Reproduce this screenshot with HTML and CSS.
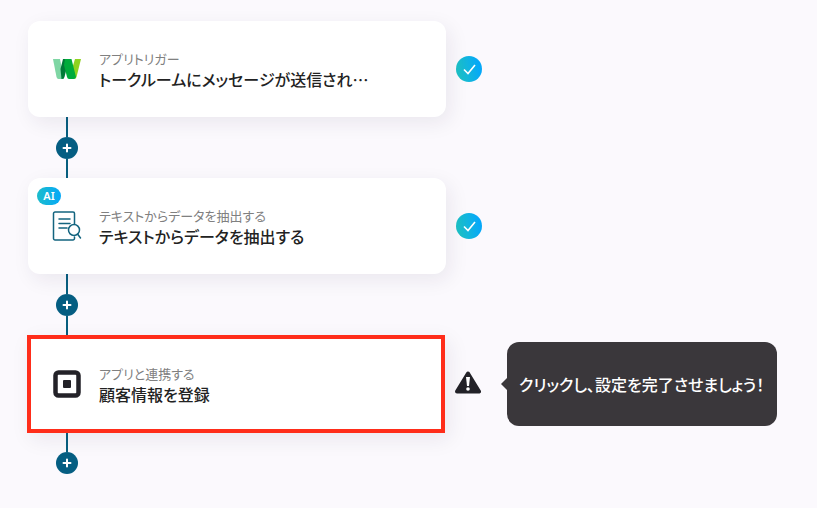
FILE: index.html
```html
<!DOCTYPE html>
<html lang="ja">
<head>
    <meta charset="UTF-8">
    <meta name="viewport" content="width=device-width, initial-scale=1.0">
    <title>フロー設定</title>
    <link rel="stylesheet" href="styles.css">
</head>
<body>
    <main class="flow">
        <!-- トリガー -->
        <div class="step">
            <button type="button" class="card">
                <svg class="card-icon" viewBox="0 0 28 28" aria-hidden="true">
                    <path fill="#7fd6a4" d="M0 4h7l4 20H5.500q-1.500 0-2-2z"/>
                    <path fill="#8fd320" d="M22 4h6l-4.500 18q-.5 2-2.500 2h-5z"/>
                    <path fill="#007a37" d="M10 4h6l-4.500 18q-.5 2-2.500 2H8.500L7.500 14z"/>
                    <path fill="#00ab3b" d="M12 4h6.500l4.500 18q-.5 2-2.500 2H16q-1.500 0-2-2l-3-12z"/>
                </svg>
                <span class="card-text">
                    <span class="card-label">アプリトリガー</span>
                    <span class="card-title">トークルームにメッセージが送信され…</span>
                </span>
            </button>
            <svg class="status" viewBox="0 0 26 26" role="img" aria-label="設定済み">
                <defs>
                    <linearGradient id="done" x1="0" y1="0.6" x2="1" y2="0.4">
                        <stop offset="0.1" stop-color="#1cc0c8"/>
                        <stop offset="0.9" stop-color="#05a8f8"/>
                    </linearGradient>
                </defs>
                <circle cx="13" cy="13" r="13" fill="url(#done)"/>
                <path d="M8 13.500l4 4 7-8.500" fill="none" stroke="#fff" stroke-width="1.600"/>
            </svg>
        </div>

        <div class="connector">
            <button type="button" class="add" aria-label="追加">
                <svg viewBox="0 0 22 22"><path d="M11 7.500v7M7.500 11h7"/></svg>
            </button>
        </div>

        <!-- AIによる抽出 -->
        <div class="step">
            <button type="button" class="card">
                <span class="badge">AI</span>
                <svg class="card-icon doc" viewBox="0 0 28 28" aria-hidden="true">
                    <path d="M21.500 12V1.500a1.500 1.500 0 0 0-1.500-1.500H2A1.500 1.500 0 0 0 .5 1.500v25A1.500 1.500 0 0 0 2 28h18a1.500 1.500 0 0 0 1.500-1.500V25"/>
                    <path d="M6 7h11M6 11.500h11M6 16h8"/>
                    <circle cx="21" cy="18" r="5.500"/>
                    <path d="M24.500 22l3 4"/>
                </svg>
                <span class="card-text">
                    <span class="card-label">テキストからデータを抽出する</span>
                    <span class="card-title">テキストからデータを抽出する</span>
                </span>
            </button>
            <svg class="status" viewBox="0 0 26 26" role="img" aria-label="設定済み">
                <circle cx="13" cy="13" r="13" fill="url(#done)"/>
                <path d="M8 13.500l4 4 7-8.500" fill="none" stroke="#fff" stroke-width="1.600"/>
            </svg>
        </div>

        <div class="connector">
            <button type="button" class="add" aria-label="追加">
                <svg viewBox="0 0 22 22"><path d="M11 7.500v7M7.500 11h7"/></svg>
            </button>
        </div>

        <!-- アプリ連携 -->
        <div class="step">
            <button type="button" class="card selected" aria-describedby="tip">
                <svg class="card-icon" viewBox="0 0 28 28" aria-hidden="true">
                    <rect x="2.500" y="2.500" width="23" height="23" rx="3" fill="#fff" stroke="#232228" stroke-width="4.500"/>
                    <rect x="10" y="10" width="8" height="8" rx="1" fill="#232228"/>
                </svg>
                <span class="card-text">
                    <span class="card-label">アプリと連携する</span>
                    <span class="card-title">顧客情報を登録</span>
                </span>
            </button>
            <svg class="status" viewBox="0 0 26 26" role="img" aria-label="未設定">
                <path d="M13 2.500L24 20.500H2z" fill="#232228" stroke="#232228" stroke-width="4" stroke-linejoin="round"/>
                <path d="M11 6h4l-1 9h-2z" fill="#fff"/>
                <circle cx="13" cy="18" r="1.800" fill="#fff"/>
            </svg>
            <div class="tooltip" id="tip" role="tooltip">クリックし、設定を完了させましょう！</div>
        </div>

        <div class="connector last">
            <button type="button" class="add" aria-label="追加">
                <svg viewBox="0 0 22 22"><path d="M11 7.500v7M7.500 11h7"/></svg>
            </button>
        </div>
    </main>
</body>
</html>
```
FILE: styles.css
```css
body {
    margin: 0;
    background-color: #fbf9fd;
    color: #222;
    font-family: "Noto Sans CJK JP", sans-serif;
    font-feature-settings: "palt";
}
button {
    padding: 0;
    border: none;
    color: inherit;
    font: inherit;
    font-feature-settings: inherit;
    cursor: pointer;
}
.flow {
    padding: 21px 28px 32px;
}
.step {
    display: flex;
    align-items: center;
    gap: 10px;
}
.card {
    position: relative;
    box-sizing: border-box;
    display: flex;
    flex: 0 1 418px;
    align-items: center;
    gap: 18px;
    min-width: 0;
    min-height: 96px;
    padding: 0 25px;
    background-color: #fff;
    border-radius: 12px;
    box-shadow: 4px 6px 20px rgba(40, 30, 60, 0.08);
    text-align: left;
}
.card.selected {
    min-height: 98px;
    margin-left: -1px;
    padding: 0 22px;
    border: 4px solid #ff2d1a;
    border-radius: 0;
}
.card-icon {
    flex: none;
    width: 28px;
    height: 28px;
}
.doc {
    overflow: visible;
    fill: none;
    stroke: #13647f;
    stroke-width: 1.5;
    stroke-linecap: round;
}
.card-text {
    display: flex;
    flex-direction: column;
    min-width: 0;
    padding-bottom: 1px;
}
.card-label {
    color: #808080;
    font-size: 13px;
    line-height: 20px;
}
.card-title {
    font-size: 16px;
    font-weight: 500;
    line-height: 20px;
}
.badge {
    position: absolute;
    top: 9px;
    left: 9px;
    width: 24px;
    border-radius: 9px;
    background: linear-gradient(90deg, #1cbccb, #05a8f8);
    color: #fff;
    font-family: "Noto Sans", sans-serif;
    font-size: 11px;
    font-weight: 600;
    line-height: 18px;
    text-align: center;
}
.status {
    flex: none;
    width: 26px;
    height: 26px;
}

/* 縦線と追加ボタン */
.connector {
    display: flex;
    flex-direction: column;
    align-items: center;
    width: 22px;
    margin-left: 28px;
}
.connector::before,
.connector::after {
    content: "";
    width: 2px;
    height: 20px;
    background-color: #075f7f;
}
.connector::after {
    height: 19px;
}
.connector.last::before {
    height: 19px;
}
.connector.last::after {
    display: none;
}
.add {
    width: 22px;
    height: 22px;
    border-radius: 50%;
    background-color: #055e82;
}
.add svg {
    display: block;
    fill: none;
    stroke: #fff;
    stroke-width: 2;
    stroke-linecap: round;
}
.tooltip {
    position: relative;
    box-sizing: border-box;
    flex: 0 1 270px;
    margin-left: 16px;
    padding: 32px 12px;
    border-radius: 12px;
    background-color: #3a373b;
    color: #fff;
    font-size: 16px;
    font-weight: 500;
    line-height: 20px;
}
.tooltip::before {
    content: "";
    position: absolute;
    top: 50%;
    right: 100%;
    border: 6px solid transparent;
    border-left: none;
    border-right-color: #3a373b;
    transform: translateY(-50%);
}
```
